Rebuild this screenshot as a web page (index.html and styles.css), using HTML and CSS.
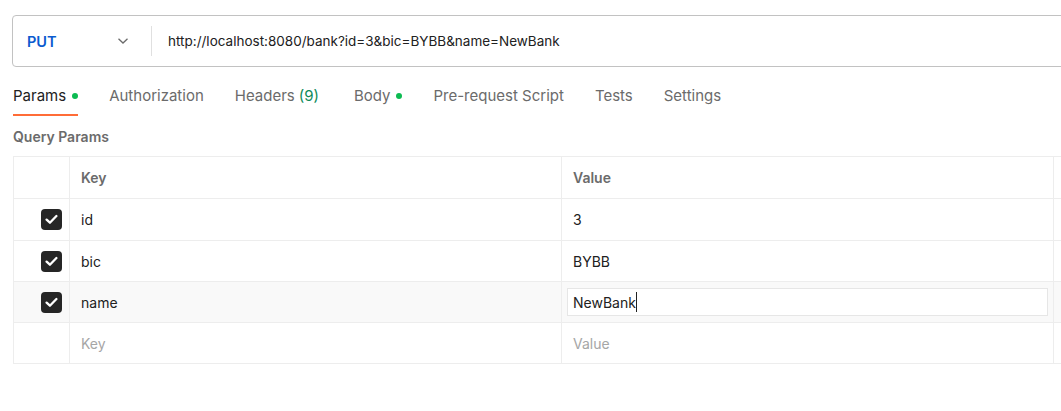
FILE: index.html
```html
<!DOCTYPE html>
<html>
<head>
<meta charset="utf-8">
<link rel="stylesheet" href="styles.css">
</head>
<body>
<div class="page">
  <div class="urlbar">
    <div class="method">
      <span class="method-name">PUT</span>
      <svg class="chev" width="12" height="8" viewBox="0 0 12 8"><path d="M1.5 1.8 L6 6 L10.5 1.8" fill="none" stroke="#6b6b6b" stroke-width="1.3"/></svg>
    </div>
    <div class="divider"></div>
    <div class="url">http://localhost:8080/bank?id=3&amp;bic=BYBB&amp;name=NewBank</div>
  </div>

  <div class="tabs">
    <div class="tab active">Params <span class="dot"></span></div>
    <div class="tab">Authorization</div>
    <div class="tab headers">Headers <span class="count">(9)</span></div>
    <div class="tab">Body <span class="dot"></span></div>
    <div class="tab">Pre-request Script</div>
    <div class="tab">Tests</div>
    <div class="tab">Settings</div>
  </div>

  <div class="section-title">Query Params</div>

  <div class="table">
    <div class="row head">
      <div class="cell check"></div>
      <div class="cell">Key</div>
      <div class="cell">Value</div>
      <div class="cell"></div>
    </div>
    <div class="row tall">
      <div class="cell check"><span class="cb"><svg width="13" height="11" viewBox="0 0 13 11"><path d="M1.6 5.6 L4.9 8.7 L11.4 2" fill="none" stroke="#fff" stroke-width="2.3" stroke-linecap="round" stroke-linejoin="round"/></svg></span></div>
      <div class="cell">id</div>
      <div class="cell">3</div>
      <div class="cell"></div>
    </div>
    <div class="row">
      <div class="cell check"><span class="cb"><svg width="13" height="11" viewBox="0 0 13 11"><path d="M1.6 5.6 L4.9 8.7 L11.4 2" fill="none" stroke="#fff" stroke-width="2.3" stroke-linecap="round" stroke-linejoin="round"/></svg></span></div>
      <div class="cell">bic</div>
      <div class="cell">BYBB</div>
      <div class="cell"></div>
    </div>
    <div class="row hover">
      <div class="cell check"><span class="cb"><svg width="13" height="11" viewBox="0 0 13 11"><path d="M1.6 5.6 L4.9 8.7 L11.4 2" fill="none" stroke="#fff" stroke-width="2.3" stroke-linecap="round" stroke-linejoin="round"/></svg></span></div>
      <div class="cell">name</div>
      <div class="cell editing"><div class="input">NewBank<span class="caret"></span></div></div>
      <div class="cell"></div>
    </div>
    <div class="row">
      <div class="cell check"></div>
      <div class="cell placeholder">Key</div>
      <div class="cell placeholder">Value</div>
      <div class="cell"></div>
    </div>
  </div>
</div>
</body>
</html>
```

FILE: styles.css
```css
html, body {
  margin: 0;
  padding: 0;
  background: #ffffff;
}
body {
  font-family: Inter, "Noto Sans", sans-serif;
  font-size: 14px;
  color: #212121;
  width: 1061px;
  height: 411px;
  overflow: hidden;
}
.page {
  padding: 15px 0 0 12px;
  overflow: hidden;
}
.urlbar {
  display: flex;
  align-items: center;
  width: 1080px;
  height: 50px;
  border: 1px solid #c2c2c2;
  border-radius: 4px;
  box-sizing: content-box;
}
.method {
  display: flex;
  align-items: center;
  justify-content: space-between;
  width: 138px;
  box-sizing: border-box;
  padding: 0 22px 0 14px;
}
.method-name {
  color: #0b5bcf;
  font-weight: 600;
  font-size: 14.5px;
}
.chev {
  display: block;
}
.divider {
  width: 1px;
  height: 30px;
  background: #e0e0e0;
}
.url {
  padding-left: 16px;
  color: #212121;
  font-size: 13.5px;
}
.tabs {
  display: flex;
  margin-top: 14px;
  padding-left: 1px;
  height: 35px;
}
.tab {
  display: flex;
  align-items: flex-start;
  color: #6b6b6b;
  margin-right: 31px;
  height: 35px;
  box-sizing: border-box;
  padding-top: 4px;
  line-height: 22px;
  font-size: 15px;
}
.tab.headers {
  margin-right: 35px;
}
.tab.active {
  color: #212121;
  border-bottom: 2px solid #ff6c37;
}
.dot {
  display: inline-block;
  width: 6px;
  height: 6px;
  border-radius: 50%;
  background: #0cbb52;
  margin-left: 6px;
  margin-top: 8px;
}
.count {
  color: #0f8a5a;
  margin-left: 4px;
}
.section-title {
  margin-top: 11px;
  padding-left: 1px;
  font-weight: 600;
  color: #6b6b6b;
  font-size: 14px;
  line-height: 20px;
}
.table {
  margin-top: 9px;
  margin-left: 1px;
  border-top: 1px solid #ededed;
  border-left: 1px solid #ededed;
  width: 1200px;
}
.row {
  display: grid;
  grid-template-columns: 56px 492px 492px 160px;
  height: 40px;
  border-bottom: 1px solid #ededed;
}
.row.head, .row.tall {
  height: 41px;
}
.row.hover {
  background: #f9f9f9;
}
.cell {
  display: flex;
  align-items: center;
  padding-left: 11px;
  border-right: 1px solid #ededed;
}
.head .cell {
  font-weight: 600;
  color: #6b6b6b;
}
.cell.check {
  padding-left: 0;
  justify-content: flex-end;
  padding-right: 7px;
}
.cb {
  width: 21px;
  height: 21px;
  border-radius: 4px;
  background: #262626;
  display: flex;
  align-items: center;
  justify-content: center;
}
.cb svg {
  display: block;
}
.placeholder {
  color: #a6a6a6;
}
.cell.editing {
  padding-left: 5px;
  padding-right: 5px;
}
.input {
  flex: 1;
  height: 28px;
  box-sizing: border-box;
  border: 1px solid #e6e6e6;
  background: #ffffff;
  display: flex;
  align-items: center;
  padding-left: 5px;
}
.caret {
  display: inline-block;
  width: 1px;
  height: 20px;
  background: #212121;
}
```
